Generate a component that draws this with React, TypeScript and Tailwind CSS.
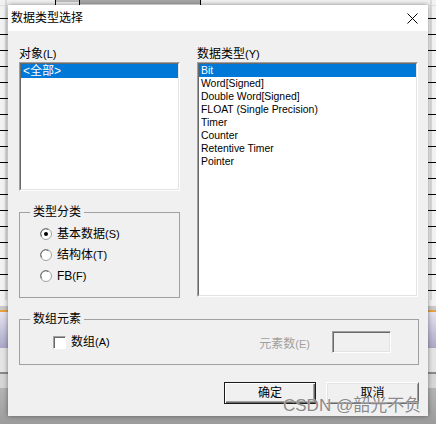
import React from "react";

const ticks = Array.from({ length: 18 }, (_, i) => 18 + i * 16);

function Background() {
  return (
    <svg className="absolute inset-0" width={436} height={424}>
      <defs>
        <linearGradient id="lav" x1="0" y1="0" x2="0" y2="1">
          <stop offset="0" stopColor="#e6e4f0" />
          <stop offset="1" stopColor="#a9a7c6" />
        </linearGradient>
        <linearGradient id="btm" x1="0" y1="0" x2="0" y2="1">
          <stop offset="0" stopColor="#b4b4b4" />
          <stop offset="1" stopColor="#9c9c9c" />
        </linearGradient>
      </defs>
      <rect width={436} height={424} fill="#f2f2f2" />
      <rect x={79} y={0} width={121} height={4} fill="#a8a8a8" />
      <rect x={55} y={0} width={24} height={2} fill="#bdbdbd" />
      <rect x={55} y={0} width={1} height={6} fill="#000" />
      <rect x={79} y={0} width={1} height={6} fill="#000" />
      <rect x={200} y={0} width={1} height={6} fill="#000" />
      <rect x={0} y={5} width={436} height={1} fill="#e0e0e0" />
      <rect x={5} y={0} width={2} height={300} fill="#dcdcdc" />
      <rect x={430} y={0} width={2} height={300} fill="#dcdcdc" />
      {ticks.map((y) => (
        <g key={y}>
          <rect x={0} y={y} width={8} height={1} fill="#000" />
          <rect x={428} y={y} width={8} height={1} fill="#000" />
        </g>
      ))}
      <rect x={0} y={306} width={436} height={4} fill="#c8c8c8" />
      <rect x={0} y={310} width={436} height={2} fill="#e8a040" />
      <rect x={0} y={312} width={436} height={36} fill="url(#lav)" />
      <rect x={0} y={348} width={436} height={24} fill="#e4e4e4" />
      <rect x={0} y={372} width={436} height={2} fill="#8a8a8a" />
      <rect x={0} y={374} width={436} height={14} fill="#d6d6d6" />
      <rect x={0} y={388} width={436} height={36} fill="url(#btm)" />
    </svg>
  );
}

function Sunken({ className, children }: { className?: string; children?: React.ReactNode }) {
  return (
    <div className={"border border-t-[#a0a0a0] border-l-[#a0a0a0] border-r-white border-b-white " + (className ?? "")}>
      <div className="h-full w-full border border-t-[#696969] border-l-[#696969] border-r-[#e3e3e3] border-b-[#e3e3e3] bg-white">
        {children}
      </div>
    </div>
  );
}

function Radio({ checked, label, mn }: { checked?: boolean; label: string; mn: string }) {
  return (
    <div className="flex h-[21px] items-center">
      <svg width={12} height={12} viewBox="0 0 12 12" className="shrink-0">
        <circle cx={6} cy={6} r={5.5} fill="#ffffff" stroke="#a0a0a0" strokeWidth={1} />
        <path d="M1.6 8.5 A5 5 0 0 1 8.5 1.6" fill="none" stroke="#696969" strokeWidth={1} />
        {checked && <circle cx={6} cy={6} r={2} fill="#000" />}
      </svg>
      <span className="ml-[5px] text-[12px] leading-[14px] text-black">
        {label}
        <span className="text-[11px]">{mn}</span>
      </span>
    </div>
  );
}

function Button({ label, def }: { label: string; def?: boolean }) {
  return (
    <div
      className={
        "flex h-[22px] items-center justify-center bg-[#f0f0f0] text-[12px] text-black " +
        (def
          ? "w-[92px] border border-[#1a1a1a] shadow-[inset_1px_1px_0_#ffffff,inset_-1px_-1px_0_#696969,inset_-2px_-2px_0_#a0a0a0]"
          : "w-[93px] border border-t-white border-l-white border-r-[#696969] border-b-[#696969] shadow-[inset_1px_1px_0_#e3e3e3,inset_-1px_-1px_0_#a0a0a0]")
      }
    >
      {label}
    </div>
  );
}

const dataTypes = [
  "Bit",
  "Word[Signed]",
  "Double Word[Signed]",
  "FLOAT (Single Precision)",
  "Timer",
  "Counter",
  "Retentive Timer",
  "Pointer",
];

export default function App() {
  return (
    <div className="relative h-[424px] w-[436px] overflow-hidden pl-[8px] pt-[5px] font-['Liberation_Sans','Noto_Sans_CJK_SC',sans-serif]">
      <Background />
      <div className="relative flex h-[411px] w-[420px] flex-col bg-[#f0f0f0] shadow-[0_0_5px_rgba(0,0,0,0.45)]">
        {/* title bar */}
        <div className="flex h-[26px] items-center justify-between bg-white pl-[3px] pr-[10px]">
          <span className="text-[12px] leading-[14px] text-black">数据类型选择</span>
          <svg width={11} height={11} viewBox="0 0 11 11">
            <path d="M0.5 0.5 L10.5 10.5 M10.5 0.5 L0.5 10.5" stroke="#000" strokeWidth={1} />
          </svg>
        </div>

        {/* body */}
        <div className="flex flex-1 flex-col pl-[11px] pr-[9px] pt-[16px]">
          <div className="flex">
            {/* left column */}
            <div className="flex w-[161px] flex-col">
              <div className="h-[14px] text-[12px] leading-[14px] text-black">
                对象<span className="text-[11px]">(L)</span>
              </div>
              <Sunken className="mt-[1px] h-[129px]">
                <div className="flex h-[14px] items-center bg-[#0078d7] pl-[2px] text-[12px] leading-[14px] text-white">
                  &lt;全部&gt;
                </div>
              </Sunken>
              <fieldset className="mt-[14px] h-[93px] border border-[#a0a0a0]">
                <legend className="ml-[10px] px-[3px] text-[12px] leading-[14px] text-black">类型分类</legend>
                <div className="pl-[20px] pt-[4px]">
                  <Radio checked label="基本数据" mn="(S)" />
                  <Radio label="结构体" mn="(T)" />
                  <Radio label="FB" mn="(F)" />
                </div>
              </fieldset>
            </div>

            {/* right column */}
            <div className="ml-[17px] flex w-[221px] flex-col">
              <div className="h-[14px] text-[12px] leading-[14px] text-black">
                数据类型<span className="text-[11px]">(Y)</span>
              </div>
              <Sunken className="mt-[1px] h-[235px]">
                {dataTypes.map((t, i) => (
                  <div
                    key={t}
                    className={
                      "flex h-[13px] items-center pl-[2px] text-[10.4px] leading-[13px] " +
                      (i === 0 ? "bg-[#0078d7] text-white" : "text-black")
                    }
                  >
                    {t}
                  </div>
                ))}
              </Sunken>
            </div>
          </div>

          {/* array group */}
          <fieldset className="mt-[14px] h-[53px] border border-[#a0a0a0]">
            <legend className="ml-[10px] px-[3px] text-[12px] leading-[14px] text-black">数组元素</legend>
            <div className="flex h-[28px] items-center pl-[33px] pt-[4px]">
              <div className="h-[13px] w-[13px] border border-t-[#a0a0a0] border-l-[#a0a0a0] border-r-white border-b-white bg-white shadow-[inset_1px_1px_0_#696969]" />
              <span className="ml-[5px] text-[12px] leading-[14px] text-black">
                数组<span className="text-[11px]">(A)</span>
              </span>
              <span className="ml-auto mt-[4px] text-[12px] leading-[14px] text-[#a0a0a0]">
                元素数<span className="text-[11px]">(E)</span>
              </span>
              <div className="ml-[22px] mr-[27px] h-[22px] w-[59px] border border-t-[#a0a0a0] border-l-[#a0a0a0] border-r-white border-b-white bg-[#f0f0f0] shadow-[inset_1px_1px_0_#696969,inset_-1px_-1px_0_#e3e3e3]" />
            </div>
          </fieldset>

          {/* buttons */}
          <div className="mt-[17px] flex justify-end gap-[10px]">
            <Button label="确定" def />
            <Button label="取消" />
          </div>
        </div>
      </div>

      {/* watermark */}
      <div className="absolute left-[283px] top-[396px] text-[17px] leading-[20px] text-[#8a8a8a] [text-shadow:0_0_1px_#ffffff]">
        CSDN @韶光不负
      </div>
    </div>
  );
}
